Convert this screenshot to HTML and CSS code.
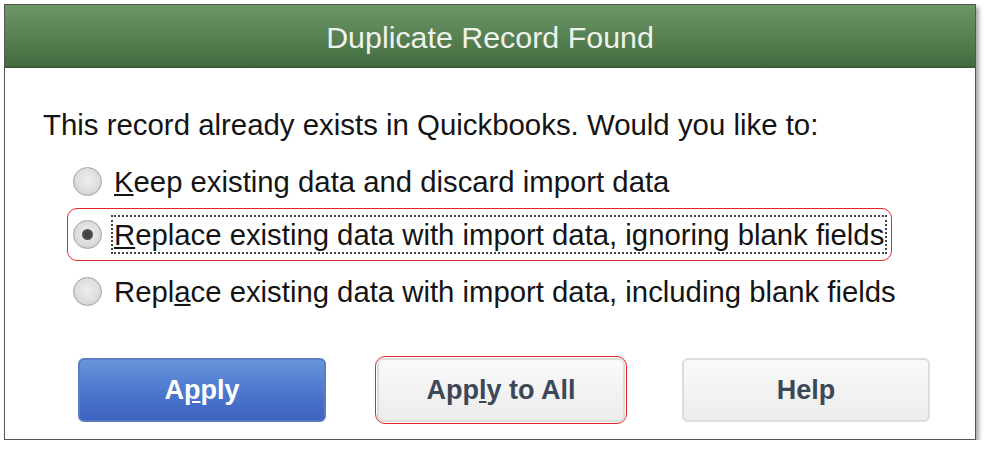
FILE: index.html
```html
<!DOCTYPE html>
<html lang="en">
<head>
  <meta charset="UTF-8">
  <title>Duplicate Record Found</title>
  <link rel="stylesheet" href="styles.css">
</head>
<body>

<div class="dialog">
  <div class="title-bar">Duplicate Record Found</div>

  <div class="dialog-body">
    <p class="prompt">This record already exists in Quickbooks. Would you like to:</p>

    <div class="options">
      <label class="option">
        <span class="radio"></span>
        <span class="option-text"><u>K</u>eep existing data and discard import data</span>
      </label>

      <label class="option option-marked">
        <span class="radio radio-checked"></span>
        <span class="option-text focused"><u>R</u>eplace existing data with import data, ignoring blank fields</span>
      </label>

      <label class="option">
        <span class="radio"></span>
        <span class="option-text">Repl<u>a</u>ce existing data with import data, including blank fields</span>
      </label>
    </div>

    <div class="buttons">
      <div class="btn-slot">
        <button class="btn btn-primary">A<u>p</u>ply</button>
      </div>
      <div class="btn-slot btn-marked">
        <button class="btn">App<u>l</u>y to All</button>
      </div>
      <div class="btn-slot btn-help">
        <button class="btn">Help</button>
      </div>
    </div>
  </div>
</div>

</body>
</html>
```

FILE: styles.css
```css
body {
  margin: 0;
  background: #fff;
  font-family: 'Liberation Sans', Arial, sans-serif;
  color: #141414;
}

.dialog {
  margin: 4px 0 0 4px;
  width: 970px;
  height: 434px;
  border: 1px solid #555;
  background: #fff;
  box-shadow: 3px 3px 4px rgba(0, 0, 0, 0.35);
}

.title-bar {
  height: 61px;
  line-height: 64px;
  text-align: center;
  font-size: 30.4px;
  color: #eef2ec;
  background: linear-gradient(#6c9568, #567f52 55%, #426b3f);
  border-bottom: 2px solid #3a5c37;
}

.dialog-body {
  padding: 0 0 0 38px;
}

.prompt {
  margin: 40px 0 0 0;
  font-size: 29.4px;
  line-height: 34px;
  white-space: nowrap;
}

.options {
  margin: 13px 0 0 24px;
  display: flex;
  flex-direction: column;
}

.option {
  display: flex;
  align-items: center;
  gap: 12px;
  height: 53px;
  width: 825px;
  padding-left: 5px;
  box-sizing: border-box;
  font-size: 29.3px;
  border: 1px solid transparent;
  border-radius: 10px;
}

.option-marked {
  margin-bottom: 4px;
  border-color: #e8242a;
}

.radio {
  flex: none;
  width: 29px;
  height: 29px;
  border-radius: 50%;
  border: 1px solid #a4a4a4;
  background: radial-gradient(circle at 50% 45%, #eeeeee 0, #dedede 55%, #c2c2c2 100%);
  box-sizing: border-box;
  position: relative;
}

.radio-checked::after {
  content: '';
  position: absolute;
  left: 8px;
  top: 8px;
  width: 11px;
  height: 11px;
  border-radius: 50%;
  background: radial-gradient(#3a3a3a, #5a5a5a);
}

.option-text {
  line-height: 33px;
  white-space: nowrap;
}

.focused {
  outline: 2px dotted #444;
  outline-offset: 1px;
}

.buttons {
  display: flex;
  margin: 38px 0 0 33px;
  gap: 47px;
}

.btn-slot {
  padding: 1px;
  border: 1px solid transparent;
  border-radius: 10px;
}

.btn-marked {
  border-color: #e8242a;
}

.btn-help {
  margin-left: 6px;
}

.btn {
  display: block;
  width: 248px;
  height: 64px;
  font-family: 'Liberation Sans', Arial, sans-serif;
  font-size: 27px;
  font-weight: bold;
  color: #3c4858;
  border: 2px solid #dcdcdc;
  border-radius: 6px;
  background: linear-gradient(#fafafa, #ececec);
}

.btn-primary {
  color: #fff;
  border-color: #5a7cc0;
  background: linear-gradient(#6795db, #4a74cc 60%, #3d63c0);
}
```
